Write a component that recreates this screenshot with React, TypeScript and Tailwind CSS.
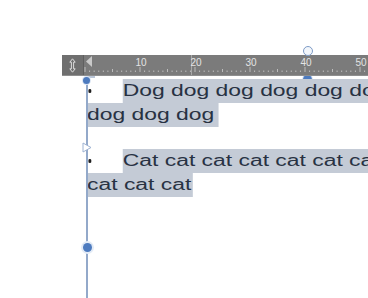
const ticks = Array.from({ length: 62 }, (_, i) => i);
const labels = [10, 20, 30, 40, 50];

function Ruler() {
  return (
    <div className="flex h-[21px] w-[306px] bg-[#7b7b7b] border-b border-[#8f8f8f]">
      {/* handle */}
      <div className="w-[22px] flex items-center justify-center bg-[#6f6f6f] border-r border-[#5f5f5f]">
        <svg width="7" height="15" viewBox="0 0 7 15">
          <path
            d="M3.5 0.8 L6.2 4.2 L4.6 4.2 L4.6 10.8 L6.2 10.8 L3.5 14.2 L0.8 10.8 L2.4 10.8 L2.4 4.2 L0.8 4.2 Z"
            fill="none"
            stroke="#e6e6e6"
            strokeWidth="0.9"
          />
        </svg>
      </div>
      <svg width="283" height="20" className="block">
        <line x1="107.5" y1="0" x2="107.5" y2="20" stroke="#a8a8a8" strokeWidth="1" />
        {ticks.map((i) => {
          const x = 1 + (i * 55) / 12;
          const top = i % 12 === 0 ? 12 : i % 6 === 0 ? 14 : 15.5;
          return (
            <line key={i} x1={x} y1={top} x2={x} y2="17" stroke="#cdcdcd" strokeWidth="0.8" />
          );
        })}
        {labels.map((n, k) => (
          <text
            key={n}
            x={1 + 55 * (k + 1) + 1}
            y="10.5"
            textAnchor="middle"
            fontSize="10"
            fill="#e4e4e4"
            fontFamily="Liberation Sans, Arial, sans-serif"
          >
            {n}
          </text>
        ))}
        <polygon points="8,1 2,6.5 8,12" fill="#c9c9c9" />
      </svg>
    </div>
  );
}

export default function App() {
  return (
    <div className="relative w-[368px] h-[298px] overflow-hidden bg-white font-['Liberation_Sans',Arial,sans-serif]">
      {/* dot hidden partly behind the ruler */}
      <div className="absolute left-[302.5px] top-[75px] w-[9px] h-[9px] rounded-full bg-[#4d7bbf] ring-1 ring-[#dce6f4]" />

      <div className="relative z-10 pt-[55px] pl-[62px]">
        <Ruler />
      </div>

      {/* text block, stretched horizontally like the reference */}
      <div className="pt-[3px] pl-[87px]">
        <div className="origin-top-left scale-x-[1.43] text-[16px] leading-[24px] text-[#283243] whitespace-nowrap">
          <div className="flex">
            <span className="w-[25px] h-[24px] bg-white flex items-center pl-[0.7px]">
              <span className="w-[2.8px] h-[4px] rounded-full bg-[#1f1f1f]" />
            </span>
            <span className="flex-1 bg-[#c4cbd6]">Dog dog dog dog dog dog</span>
          </div>
          <div className="flex">
            <span className="bg-[#c4cbd6] pr-[3px]">dog dog dog</span>
          </div>

          <div className="flex mt-[22px]">
            <span className="w-[25px] h-[24px] bg-white flex items-center pl-[0.7px]">
              <span className="w-[2.8px] h-[4px] rounded-full bg-[#1f1f1f]" />
            </span>
            <span className="flex-1 bg-[#c4cbd6]">Cat cat cat cat cat cat cat</span>
          </div>
          <div className="flex">
            <span className="bg-[#c4cbd6] pr-[1.5px]">cat cat cat</span>
          </div>
        </div>
      </div>

      {/* indent guide */}
      <div className="absolute left-[86px] top-[76px] bottom-0 w-[1.5px] bg-[#93a9ca]" />
      <div className="absolute left-[86px] top-[74px] w-[9px] h-[4px] bg-[#bac6d8]" />
      <div className="absolute left-[83px] top-[77px] w-[7px] h-[7px] rounded-full bg-[#4d7bbf] ring-1 ring-[#dce6f4]" />
      <svg className="absolute left-[82px] top-[142px]" width="10" height="11" viewBox="0 0 10 11">
        <polygon points="1,1 9,5.5 1,10" fill="white" stroke="#9db2d2" strokeWidth="1" />
      </svg>
      <div className="absolute left-[82.5px] top-[243px] w-[9px] h-[9px] rounded-full bg-[#4d7bbf] ring-2 ring-[#e3ebf6]" />

      {/* handle above ruler */}
      <div className="absolute z-20 left-[302.5px] top-[45.5px] w-[10px] h-[10px] rounded-full border-[1.5px] border-[#7d9bc6] bg-[#f2f6fb]" />
    </div>
  );
}
